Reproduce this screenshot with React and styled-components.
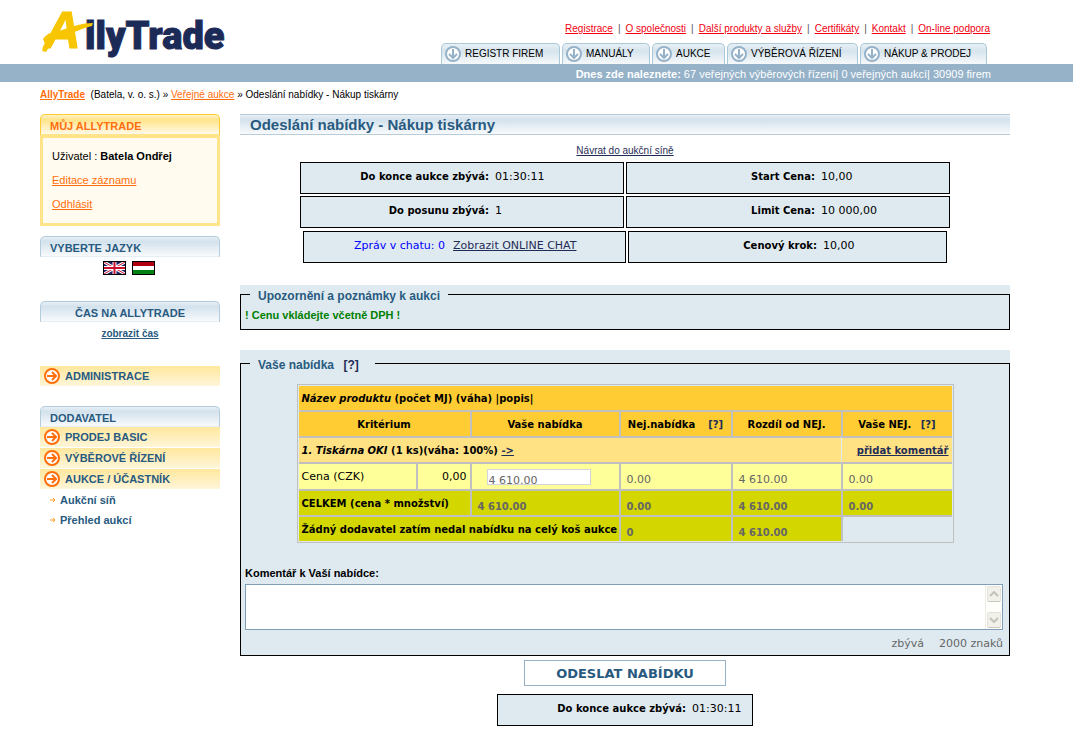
import React from 'react'
import styled, { createGlobalStyle } from 'styled-components'

const GlobalStyle = createGlobalStyle`
*{
box-sizing:border-box;
}
body{
margin:0;
background:#fff;
color:#000;
font-family:"Liberation Sans", Arial, sans-serif;
font-size:11px;
line-height:14px;
}
a{
color:inherit;
}
`

const Header = styled.header`
display:flex;
justify-content:space-between;
height:64px;
padding:0 83px 0 40px;
`
const Logo = styled.a`
display:block;
`
const HeaderRight = styled.div`
display:flex;
flex-direction:column;
justify-content:space-between;
align-items:flex-end;
padding-top:22px;
`
const TopNav = styled.nav`
display:flex;
gap:5px;
font-size:10px;
color:#555;
white-space:nowrap;
`
const TopLink = styled.a`
color:#f00010;
`
const Tabs = styled.nav`
display:flex;
gap:2px;
margin-right:3px;
`
const Tab = styled.a`
display:flex;
align-items:center;
gap:4px;
width:${(props) => props.$width}px;
height:21px;
padding-left:3px;
border:1px solid #aac8d8;
border-bottom:0;
border-radius:5px 5px 0 0;
background:linear-gradient(#e8f0f5, #d6e4ed 35%, #f6f9fb);
color:#000;
font-size:10px;
text-decoration:none;
white-space:nowrap;
`
const StatusBar = styled.div`
height:18px;
padding:0 82px 0 40px;
background:#95b2c9;
color:#fff;
line-height:20px;
text-align:right;
`
const Breadcrumb = styled.div`
padding:6px 40px 12px;
font-size:10px;
`
const OrangeLink = styled.a`
color:#ff6e0a;
`
const Page = styled.div`
display:flex;
gap:20px;
padding:0 63px 0 40px;
`

const Sidebar = styled.aside`
width:180px;
flex:none;
`
const SideTitle = styled.h2`
height:21px;
margin:${(props) => props.$top || 0}px 0 0;
padding:0 9px;
border:1px solid ${(props) => (props.$orange ? '#ffcc33' : '#b4ccdc')};
border-bottom-color:${(props) => (props.$orange ? '#ffe48a' : '#e6eef3')};
border-radius:5px 5px 0 0;
background:${(props) =>
  props.$orange
    ? 'linear-gradient(#fff3c4, #ffe48a 25%, #fffaea)'
    : 'linear-gradient(#e6eff5, #d3e2ed 25%, #f8fafc)'};
color:${(props) => (props.$orange ? '#ff6e0a' : '#285a80')};
font-size:11px;
line-height:22px;
text-align:${(props) => (props.$center ? 'center' : 'left')};
`
const UserBox = styled.div`
display:flex;
flex-direction:column;
align-items:flex-start;
gap:10px;
height:91px;
padding:11px 9px 10px;
border:3px solid #ffe48a;
background:#fffbee;
`
const Flags = styled.div`
display:flex;
justify-content:center;
gap:6px;
padding:4px 2px 26px 0;
`
const Flag = styled.a`
display:block;
height:14px;
`
const ClockLink = styled.a`
display:block;
padding:5px 0 25px;
color:#285a80;
font-size:10px;
font-weight:bold;
text-align:center;
`
const MenuItem = styled.a`
display:flex;
align-items:center;
gap:5px;
height:20px;
margin-bottom:1px;
padding-left:4px;
background:linear-gradient(#ffe79c, #fff6da);
color:#285a80;
font-weight:bold;
text-decoration:none;
`
const SubItem = styled.a`
display:flex;
align-items:center;
gap:4px;
height:20px;
padding-left:10px;
color:#285a80;
font-weight:bold;
text-decoration:none;
`

const Main = styled.main`
flex:1;
min-width:0;
`
const Title = styled.h1`
height:21px;
margin:0;
padding-left:10px;
border-top:1px solid #b8ccda;
border-bottom:1px solid #b8ccda;
background:linear-gradient(#e8eff5, #d3e2ed 25%, #f8fafc);
color:#285a80;
font-size:15px;
line-height:19px;
`
const BackLink = styled.a`
display:block;
width:max-content;
margin:9px auto 4px;
color:#1f2c56;
font-size:10px;
`
const InfoRow = styled.div`
display:grid;
grid-template-columns:${(props) => props.$columns || '1fr 1fr'};
gap:2px;
margin:0 auto ${(props) => props.$gap || 2}px;
width:${(props) => props.$width}px;
max-width:100%;
`
const InfoBox = styled.div`
display:flex;
height:32px;
padding-top:7px;
border:1px solid #000;
background:#dfeaf0;
font-family:"DejaVu Sans", Verdana, sans-serif;
white-space:nowrap;
`
const InfoLabel = styled.b`
width:188px;
font-size:10px;
text-align:right;
`
const InfoValue = styled.span`
padding-left:6px;
`
const Chat = styled.div`
display:flex;
gap:8px;
padding-left:50px;
color:#00f;
`
const DarkLink = styled.a`
color:#1f2c56;
`

const Panel = styled.div`
margin-top:${(props) => props.$top}px;
background:#dfeaf0;
`
const Fieldset = styled.fieldset`
min-width:0;
margin:0;
padding:0 4px 4px;
border:1px solid #000;
`
const Legend = styled.legend`
margin-left:5px;
padding:4px ${(props) => props.$right || 8}px 0 8px;
color:#285a80;
font-size:12px;
font-weight:bold;
line-height:${(props) => props.$line}px;
`
const Help = styled.a`
margin-left:6px;
color:#1f2c56;
text-decoration:none;
`
const Notice = styled.p`
margin:5px 0 3px;
color:#008000;
font-weight:bold;
`

const TableFrame = styled.div`
width:657px;
max-width:100%;
margin:8px auto 23px;
padding:1px;
border:1px solid #c0c0c0;
font-family:"DejaVu Sans", Verdana, sans-serif;
`
const Table = styled.table`
width:100%;
table-layout:fixed;
border-spacing:0;
font-size:11px;
white-space:nowrap;

tr + tr > *{
    border-top:2px solid #c0c0c0;
}
tr > * + *{
    border-left:2px solid #c0c0c0;
}
`
const Row = styled.tr`
height:${(props) => props.$height || 26}px;
background:${(props) => props.$bg};
font-size:${(props) => (props.$bold ? 10 : 11)}px;
font-weight:${(props) => (props.$bold ? 'bold' : 'normal')};
`
const Head = styled.th`
padding:2px 3px 0;
text-align:${(props) => props.$align || 'center'};
`
const Cell = styled.td`
padding:1px 3px 0;
text-align:${(props) => props.$align || 'left'};
`
const CommentCell = styled(Cell)`
&&&{
    border-left:1px solid #dfeaf0;
}
`
const BlankCell = styled.td`
background:#dfeaf0;
`
const Amount = styled(Cell)`
padding:7px 6px 0;
color:#666;
`
const PriceInput = styled.input`
display:block;
width:104px;
height:16px;
margin-left:12px;
padding:6px 0 0 1px;
border:1px solid #d4d4dc;
background:#fff;
color:#666;
font-family:inherit;
font-size:11px;
line-height:10px;
`
const CommentLabel = styled.label`
display:block;
margin-bottom:4px;
font-weight:bold;
`
const CommentBox = styled.div`
display:flex;
height:46px;
margin-right:2px;
border:1px solid #7f9db9;
background:#fff;
`
const CommentArea = styled.textarea`
flex:1;
border:0;
outline:0;
resize:none;
overflow:hidden;
`
const ScrollBar = styled.div`
display:flex;
flex-direction:column;
justify-content:space-between;
width:17px;
padding:1px;
border-left:1px solid #eeede5;
background:#fefefb;
`
const ScrollButton = styled.button`
display:flex;
align-items:center;
justify-content:center;
height:16px;
padding:0;
border:1px solid #e4e3da;
border-bottom-color:#c9c7ba;
border-radius:2px;
background:#f1f0ea;
`
const Counter = styled.div`
display:flex;
justify-content:flex-end;
gap:15px;
padding:7px 2px 0 0;
color:#666;
font-family:"DejaVu Sans", Verdana, sans-serif;
`
const Submit = styled.button`
display:block;
width:202px;
height:26px;
margin:4px auto 8px;
padding:0;
border:1px solid #95b2c9;
background:#fff;
color:#285a80;
font-family:"DejaVu Sans", Verdana, sans-serif;
font-size:13px;
font-weight:bold;
`

const topLinks = ['Registrace', 'O společnosti', 'Další produkty a služby', 'Certifikáty', 'Kontakt', 'On-line podpora']

const tabs = [
  { label: 'REGISTR FIREM', width: 119 },
  { label: 'MANUÁLY', width: 88 },
  { label: 'AUKCE', width: 73 },
  { label: 'VÝBĚROVÁ ŘÍZENÍ', width: 131 },
  { label: 'NÁKUP & PRODEJ', width: 127 },
]

const LogoMark = () => (
  <svg width="190" height="64" viewBox="0 0 190 64" role="img" aria-label="AllyTrade">
    <text x="45" y="49" fill="#1c2a57" stroke="#1c2a57" strokeWidth="1" fontFamily="Roboto, sans-serif" fontWeight="900" fontSize="38">llyTrade</text>
    <text x="4" y="48" fill="#f7c600" stroke="#f7c600" strokeWidth="1" fontFamily="'Liberation Sans', sans-serif" fontWeight="bold" fontStyle="italic" fontSize="51">A</text>
    <path d="M3 39C8 32 14 32 22 30C34 26 42 23 53 23L52 26C42 28 34 33 24 36C16 38 10 39 5 44Z" fill="#f7c600" />
    <path d="M16 32C8 38 4 44 2 51L6 52C10 45 14 40 20 35Z" fill="#f7c600" />
  </svg>
)

const DownIcon = () => (
  <svg width="16" height="16" viewBox="0 0 16 16" fill="none" stroke="#95b2c9" strokeWidth="2">
    <circle cx="8" cy="8" r="7" fill="#fff" />
    <path d="M8 3V12M4 8L8 12L12 8" />
  </svg>
)

const RightIcon = () => (
  <svg width="16" height="16" viewBox="0 0 16 16" fill="none" stroke="#ff6e0a" strokeWidth="2">
    <circle cx="8" cy="8" r="7" fill="#fff" />
    <path d="M3 8H12M8 4L12 8L8 12" />
  </svg>
)

const SmallArrow = () => (
  <svg width="6" height="6" viewBox="0 0 6 6" fill="none" stroke="#ff9a1f">
    <path d="M0 3H5M3 1L5 3L3 5" />
  </svg>
)

const BritishFlag = () => (
  <svg width="23" height="14" viewBox="0 0 23 14">
    <rect width="23" height="14" fill="#1b1f66" />
    <path d="M1 1L22 13M22 1L1 13" stroke="#fff" strokeWidth="3" />
    <path d="M1 1L22 13M22 1L1 13" stroke="#c8102e" />
    <path d="M11.5 1V13M1 7H22" stroke="#fff" strokeWidth="4" />
    <path d="M11.5 1V13M1 7H22" stroke="#c8102e" strokeWidth="2" />
    <rect x="0.5" y="0.5" width="22" height="13" fill="none" stroke="#000" />
  </svg>
)

const HungarianFlag = () => (
  <svg width="23" height="14" viewBox="0 0 23 14">
    <rect width="23" height="14" fill="#fff" />
    <rect width="23" height="5" fill="#b00010" />
    <rect y="9" width="23" height="5" fill="#008010" />
    <rect x="0.5" y="0.5" width="22" height="13" fill="none" stroke="#000" />
  </svg>
)

const Chevron = ({ down }) => (
  <svg width="10" height="6" viewBox="0 0 10 6" fill="none" stroke="#c4c3ba" strokeWidth="2">
    <path d={down ? 'M1 1L5 5L9 1' : 'M1 5L5 1L9 5'} />
  </svg>
)

const Info = ({ label, value }) => (
  <InfoBox>
    <InfoLabel>{label}</InfoLabel>
    <InfoValue>{value}</InfoValue>
  </InfoBox>
)

const App = () => {
  return (
    <>
      <GlobalStyle />
      <Header>
        <Logo href="#"><LogoMark /></Logo>
        <HeaderRight>
          <TopNav>
            {topLinks.map((link, i) => (
              <React.Fragment key={link}>
                {i > 0 && <span>|</span>}
                <TopLink href="#">{link}</TopLink>
              </React.Fragment>
            ))}
          </TopNav>
          <Tabs>
            {tabs.map((tab) => (
              <Tab key={tab.label} href="#" $width={tab.width}>
                <DownIcon />
                {tab.label}
              </Tab>
            ))}
          </Tabs>
        </HeaderRight>
      </Header>
      <StatusBar>
        <b>Dnes zde naleznete:</b> 67 veřejných výběrových řízení| 0 veřejných aukcí| 30909 firem
      </StatusBar>
      <Breadcrumb>
        <OrangeLink href="#"><b>AllyTrade</b></OrangeLink>&nbsp; (Batela, v. o. s.) » <OrangeLink href="#">Veřejné aukce</OrangeLink> » Odeslání nabídky - Nákup tiskárny
      </Breadcrumb>

      <Page>
        <Sidebar>
          <SideTitle $orange>MŮJ ALLYTRADE</SideTitle>
          <UserBox>
            <span>Uživatel : <b>Batela Ondřej</b></span>
            <OrangeLink href="#">Editace záznamu</OrangeLink>
            <OrangeLink href="#">Odhlásit</OrangeLink>
          </UserBox>
          <SideTitle $top={10}>VYBERTE JAZYK</SideTitle>
          <Flags>
            <Flag href="#" aria-label="English"><BritishFlag /></Flag>
            <Flag href="#" aria-label="Magyar"><HungarianFlag /></Flag>
          </Flags>
          <SideTitle $center>ČAS NA ALLYTRADE</SideTitle>
          <ClockLink href="#">zobrazit čas</ClockLink>
          <MenuItem href="#"><RightIcon />ADMINISTRACE</MenuItem>
          <SideTitle $top={20}>DODAVATEL</SideTitle>
          <MenuItem href="#"><RightIcon />PRODEJ BASIC</MenuItem>
          <MenuItem href="#"><RightIcon />VÝBĚROVÉ ŘÍZENÍ</MenuItem>
          <MenuItem href="#"><RightIcon />AUKCE / ÚČASTNÍK</MenuItem>
          <SubItem href="#"><SmallArrow />Aukční síň</SubItem>
          <SubItem href="#"><SmallArrow />Přehled aukcí</SubItem>
        </Sidebar>

        <Main>
          <Title>Odeslání nabídky - Nákup tiskárny</Title>
          <BackLink href="#">Návrat do aukční síně</BackLink>
          <InfoRow $width={650}>
            <Info label="Do konce aukce zbývá:" value="01:30:11" />
            <Info label="Start Cena:" value="10,00" />
          </InfoRow>
          <InfoRow $width={650} $gap={3}>
            <Info label="Do posunu zbývá:" value="1" />
            <Info label="Limit Cena:" value="10 000,00" />
          </InfoRow>
          <InfoRow $width={644} $columns="323px 1fr">
            <InfoBox>
              <Chat>
                <span>Zpráv v chatu: 0</span>
                <DarkLink href="#">Zobrazit ONLINE CHAT</DarkLink>
              </Chat>
            </InfoBox>
            <Info label="Cenový krok:" value="10,00" />
          </InfoRow>

          <Panel $top={22}>
            <Fieldset>
              <Legend $line={14}>Upozornění a poznámky k aukci</Legend>
              <Notice>! Cenu vkládejte včetně DPH !</Notice>
            </Fieldset>
          </Panel>

          <Panel $top={20}>
            <Fieldset>
              <Legend $line={22} $right={16}>Vaše nabídka <Help href="#">[?]</Help></Legend>
              <TableFrame>
                <Table>
                  <colgroup>
                    <col width="117" />
                    <col width="54" />
                    <col width="149" />
                    <col width="112" />
                    <col width="110" />
                    <col />
                  </colgroup>
                  <tbody>
                    <Row $bg="#ffcc33" $bold $height={24}>
                      <Head colSpan={6} $align="left"><i>Název produktu</i> (počet MJ) (váha) |popis|</Head>
                    </Row>
                    <Row $bg="#ffcc33" $bold>
                      <Head colSpan={2}>Kritérium</Head>
                      <Head>Vaše nabídka</Head>
                      <Head>Nej.nabídka &nbsp;<Help href="#">[?]</Help></Head>
                      <Head>Rozdíl od NEJ.</Head>
                      <Head>Vaše NEJ. <Help href="#">[?]</Help></Head>
                    </Row>
                    <Row $bg="#ffe284" $bold>
                      <Cell colSpan={5}><i>1. Tiskárna OKI</i> (1 ks)(váha: 100%) <DarkLink href="#">-&gt;</DarkLink></Cell>
                      <CommentCell $align="right"><DarkLink href="#">přidat komentář</DarkLink></CommentCell>
                    </Row>
                    <Row $bg="#ffff99" $height={27}>
                      <Cell>Cena (CZK)</Cell>
                      <Cell $align="right">0,00</Cell>
                      <Cell><PriceInput aria-label="Cena (CZK)" defaultValue="4 610.00" /></Cell>
                      <Amount>0.00</Amount>
                      <Amount>4 610.00</Amount>
                      <Amount>0.00</Amount>
                    </Row>
                    <Row $bg="#d4d600" $bold>
                      <Cell colSpan={2}>CELKEM (cena * množství)</Cell>
                      <Amount>4 610.00</Amount>
                      <Amount>0.00</Amount>
                      <Amount>4 610.00</Amount>
                      <Amount>0.00</Amount>
                    </Row>
                    <Row $bg="#d4d600" $bold>
                      <Cell colSpan={3}>Žádný dodavatel zatím nedal nabídku na celý koš aukce</Cell>
                      <Amount>0</Amount>
                      <Amount>4 610.00</Amount>
                      <BlankCell />
                    </Row>
                  </tbody>
                </Table>
              </TableFrame>
              <CommentLabel htmlFor="comment">Komentář k Vaší nabídce:</CommentLabel>
              <CommentBox>
                <CommentArea id="comment" />
                <ScrollBar>
                  <ScrollButton type="button" aria-label="Nahoru"><Chevron /></ScrollButton>
                  <ScrollButton type="button" aria-label="Dolů"><Chevron down /></ScrollButton>
                </ScrollBar>
              </CommentBox>
              <Counter>
                <span>zbývá</span>
                <span>2000 znaků</span>
              </Counter>
            </Fieldset>
          </Panel>

          <Submit type="button">ODESLAT NABÍDKU</Submit>
          <InfoRow $width={256} $columns="1fr" $gap={5}>
            <Info label="Do konce aukce zbývá:" value="01:30:11" />
          </InfoRow>
        </Main>
      </Page>
    </>
  )
}

export default App
